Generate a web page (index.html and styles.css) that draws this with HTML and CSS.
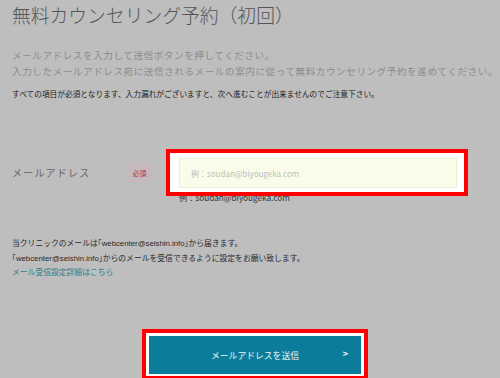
FILE: index.html
```html
<!DOCTYPE html>
<html lang="ja">
<head>
<meta charset="utf-8">
<link rel="stylesheet" href="styles.css">
</head>
<body>
<div class="page">
  <h1 class="title">無料カウンセリング予約（初回）</h1>
  <p class="intro">メールアドレスを入力して送信ボタンを押してください。<br>入力したメールアドレス宛に送信されるメールの案内に従って無料カウンセリング予約を進めてください。</p>
  <p class="note">すべての項目が必須となります、入力漏れがございますと、次へ進むことが出来ませんのでご注意下さい。</p>

  <div class="form-row">
    <div class="label">メールアドレス</div>
    <div class="badge">必須</div>
    <div class="field">
      <div class="highlight">
        <input class="input" type="text" placeholder="例：soudan@biyougeka.com">
      </div>
      <div class="example">例：soudan@biyougeka.com</div>
    </div>
  </div>

  <div class="info">
    <p>当クリニックのメールは<span class="half">「</span>webcenter@seishin.info<span class="half">」</span>から届きます。</p>
    <p><span class="half">「</span>webcenter@seishin.info<span class="half">」</span>からのメールを受信できるように設定をお願い致します。</p>
    <p><a class="link" href="#">メール受信設定詳細はこちら</a></p>
  </div>

  <div class="actions">
    <div class="btn-highlight">
      <button class="btn" type="button"><span class="btn-text">メールアドレスを送信</span><span class="chev">&gt;</span></button>
    </div>
  </div>
</div>
</body>
</html>
```

FILE: styles.css
```css
html, body {
  margin: 0;
  padding: 0;
}
body {
  background: #bebebe;
  width: 500px;
  height: 378px;
  overflow: hidden;
  font-family: "Noto Sans CJK JP", "Noto Sans", sans-serif;
}
.page {
  padding-left: 12px;
}
.title {
  margin: 0;
  font-size: 18.8px;
  line-height: 30px;
  font-weight: 300;
  color: #555;
  letter-spacing: 0;
}
.intro {
  margin: 17px 0 0;
  font-size: 9.6px;
  line-height: 16px;
  letter-spacing: 0.55px;
  color: #8c8c8c;
}
.note {
  margin: 9px 0 0;
  font-size: 7.7px;
  line-height: 12px;
  color: #222;
}
.form-row {
  margin-top: 49px;
  display: flex;
  align-items: flex-start;
}
.label {
  width: 113px;
  height: 47px;
  display: flex;
  align-items: center;
  font-size: 10px;
  letter-spacing: 1.2px;
  color: #666;
}
.badge {
  margin-top: 14px;
  width: 29px;
  height: 19px;
  display: flex;
  align-items: center;
  justify-content: center;
  background: #c5b9bb;
  color: #b23050;
  font-size: 7px;
}
.field {
  margin-left: 12px;
}
.highlight {
  position: relative;
  z-index: 1;
  box-sizing: content-box;
  border: 4px solid #f00;
  background: #fff;
  padding: 5px 7px 4px 9px;
  width: 278px;
}
.input {
  display: block;
  box-sizing: border-box;
  width: 278px;
  height: 30px;
  margin: 0;
  border: 1px solid #eceed8;
  background: #fafce9;
  padding: 0 0 0 11px;
  font-family: "Noto Sans CJK JP", "Noto Sans", sans-serif;
  font-size: 8px;
  color: #333;
  outline: none;
}
.input::placeholder {
  color: #bcbcbc;
}
.example {
  margin-top: -5px;
  padding-left: 13px;
  font-size: 8.2px;
  line-height: 12px;
  color: #333;
}
.info {
  margin-top: 33px;
}
.info p {
  margin: 0;
  font-family: "Liberation Sans", "Noto Sans CJK JP", sans-serif;
  font-size: 7.8px;
  line-height: 14px;
  color: #2a2a2a;
}
.half {
  font-family: "Noto Sans CJK JP", sans-serif;
  font-feature-settings: "halt";
}
.link {
  color: #2c7d8c;
  text-decoration: none;
}
.actions {
  margin-top: 49px;
  padding-left: 130px;
}
.btn-highlight {
  width: 212px;
  border: 4px solid #f00;
  background: #fff;
  padding: 3px 3px 2px 3px;
}
.btn {
  display: flex;
  align-items: center;
  width: 212px;
  height: 38px;
  margin: 0;
  padding: 0;
  border: 0;
  background: #0b7c99;
  color: #eef6f8;
  font-family: "Noto Sans CJK JP", "Noto Sans", sans-serif;
  position: relative;
}
.btn-text {
  flex: 1;
  text-align: center;
  font-size: 8.8px;
  letter-spacing: 0;
}
.chev {
  position: absolute;
  right: 13px;
  top: 12px;
  font-size: 9px;
  font-weight: 700;
  line-height: 12px;
}
```
